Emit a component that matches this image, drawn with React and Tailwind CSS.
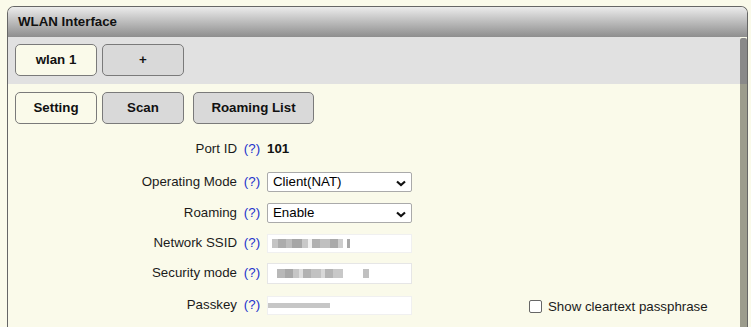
import React from "react";

const font = { fontFamily: '"Liberation Sans", Arial, sans-serif' };

function Chevron() {
  return (
    <svg width="10" height="7" viewBox="0 0 10 7" className="absolute right-[5px] top-[7px]">
      <path d="M1 1.5 L5 5 L9 1.5" fill="none" stroke="#111" strokeWidth="2.2" />
    </svg>
  );
}

function Select({ value }) {
  return (
    <div className="relative w-[145px] h-[20px] bg-white border border-[#aaa] rounded-[2px] text-[13.3px] text-black leading-[18px] pl-[5px]">
      {value}
      <Chevron />
    </div>
  );
}

function Blur({ blocks, h = 9 }) {
  return (
    <div className="flex items-center h-full pl-[4px]">
      {blocks.map((b, i) => (
        <div key={i} style={{ width: b[0], height: h, background: b[1] }} />
      ))}
    </div>
  );
}

function Row({ label, children, className = "" }) {
  return (
    <div className={"flex items-center h-[20px] " + className}>
      <div className="w-[229px] text-right text-[13.3px] text-[#1a1a1a]">{label}</div>
      <div className="w-[30px] flex justify-center">
        <span className="text-[#2233cc] text-[13.3px]">(?)</span>
      </div>
      {children}
    </div>
  );
}

export default function App() {
  return (
    <div className="w-[751px] h-[327px] bg-[#fafaea] overflow-hidden pt-[6px] pl-[7px] pr-[3px]" style={font}>
      <div className="w-[741px] h-[321px] border-l border-r border-t border-[#666] rounded-t-[7px] overflow-hidden flex flex-col">
        <div className="h-[30px] shrink-0 bg-gradient-to-b from-[#ececec] to-[#8e8e8e] pl-[10px] flex items-center text-[13.3px] font-bold text-[#111]">
          WLAN Interface
        </div>
        <div className="flex flex-1 min-h-0">
          <div className="flex-1 flex flex-col">
            <div className="h-[47px] bg-[#e1e1e1] flex items-start pt-[7px] pl-[7px] gap-[5px]">
              <div className="w-[82px] h-[32px] rounded-[5px] border border-[#7a7a7a] bg-[#fafaea] flex items-center justify-center text-[13.3px] font-bold text-[#111]">wlan 1</div>
              <div className="w-[82px] h-[32px] rounded-[5px] border border-[#7a7a7a] bg-[#d9d9d9] flex items-center justify-center text-[13.3px] font-bold text-[#111]">+</div>
            </div>
            <div className="flex pt-[8px] pl-[7px]">
              <div className="w-[82px] h-[32px] rounded-[5px] border border-[#7a7a7a] bg-[#fafaea] flex items-center justify-center text-[13.3px] font-bold text-[#111]">Setting</div>
              <div className="w-[82px] h-[32px] ml-[5px] rounded-[5px] border border-[#7a7a7a] bg-[#d9d9d9] flex items-center justify-center text-[13.3px] font-bold text-[#111]">Scan</div>
              <div className="w-[121px] h-[32px] ml-[9px] rounded-[5px] border border-[#7a7a7a] bg-[#d9d9d9] flex items-center justify-center text-[13.3px] font-bold text-[#111]">Roaming List</div>
            </div>
            <div className="flex flex-col pt-[15px]">
              <Row label="Port ID">
                <span className="text-[13.3px] font-bold text-[#111]">101</span>
              </Row>
              <Row label="Operating Mode" className="mt-[13px]"><Select value="Client(NAT)" /></Row>
              <Row label="Roaming" className="mt-[11px]"><Select value="Enable" /></Row>
              <Row label="Network SSID" className="mt-[10px]">
                <div className="w-[145px] h-[19px] bg-white border border-[#f0f0f0]">
                  <Blur blocks={[[6,"#c4c4c4"],[8,"#acacac"],[6,"#bdbdbd"],[10,"#a6a6a6"],[6,"#c8c8c8"],[4,"#f0f0f0"],[8,"#b0b0b0"],[10,"#c0c0c0"],[8,"#a9a9a9"],[5,"#cdcdcd"],[4,"#fff"],[3,"#a8a8a8"]]} />
                </div>
              </Row>
              <Row label="Security mode" className="mt-[10px]">
                <div className="w-[145px] h-[21px] bg-white border border-[#e6e6e6]">
                  <Blur blocks={[[5,"#fff"],[8,"#b8b8b8"],[8,"#a8a8a8"],[6,"#c6c6c6"],[4,"#dedede"],[8,"#b2b2b2"],[10,"#c2c2c2"],[4,"#d8d8d8"],[8,"#b4b4b4"],[10,"#c8c8c8"],[20,"#fff"],[6,"#c0c0c0"]]} />
                </div>
              </Row>
              <Row label="Passkey" className="mt-[12px]">
                <div className="w-[145px] h-[19px] bg-white border border-[#f0f0f0]">
                  <div className="flex items-center h-full">
                    <div className="h-[5px] w-[62px] bg-[#c6c6c6]" />
                  </div>
                </div>
                <div className="ml-[117px] flex items-center gap-[6px] mt-[3px]">
                  <div className="w-[13px] h-[13px] border border-[#666] rounded-[2px] bg-white" />
                  <span className="text-[13.3px] text-[#1a1a1a]">Show cleartext passphrase</span>
                </div>
              </Row>
            </div>
          </div>
          <div className="w-[7px] flex flex-col pt-[1px]">
            <div className="h-[46px] bg-[#898989] rounded-t-[2px]" />
            <div className="flex-1 bg-[#9c9c8c]" />
          </div>
        </div>
      </div>
      <div className="h-[3px] bg-[#e1e1e1] -ml-[7px] w-[751px]" />
    </div>
  );
}
